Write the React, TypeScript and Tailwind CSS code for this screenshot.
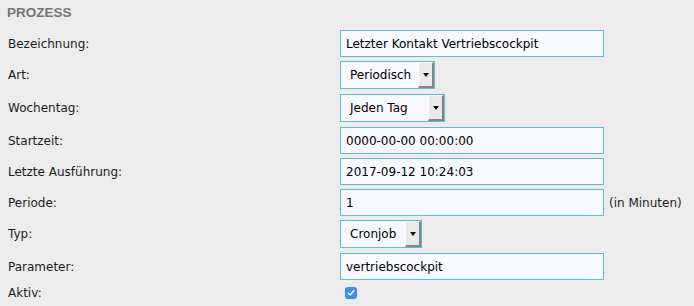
const fieldFont = { fontFamily: '"DejaVu Sans", Verdana, sans-serif' };

function Label({ children }: { children: string }) {
  return <div className="w-[332px] shrink-0 text-[12px] text-[#1c1c1c]">{children}</div>;
}

function TextInput({ value }: { value: string }) {
  return (
    <div className="flex items-center h-[27px] w-[264px] border border-[#5bbfd1] bg-[#f7f9ff] pl-[5px] text-[12px] text-black">
      {value}
    </div>
  );
}

function Select({ value, width }: { value: string; width: string }) {
  return (
    <div className={`flex items-stretch h-[28px] ${width} border border-[#5bbfd1] bg-[#f7f9ff] text-[12px] text-black`}>
      <div className="flex-1 flex items-center pl-[9px]">{value}</div>
      <div className="w-[16px] flex items-center justify-center bg-[#e9e9e9] border-t border-l border-white border-r-2 border-b-2 border-r-[#858585] border-b-[#858585]">
        <svg width="6" height="4" viewBox="0 0 6 4">
          <path d="M0 0 L6 0 L3 4 Z" fill="#111" />
        </svg>
      </div>
    </div>
  );
}

export default function App() {
  return (
    <div className="w-[694px] h-[306px] bg-[#ececec] overflow-hidden pl-[8px]" style={fieldFont}>
      <h2
        className="pt-[5px] -ml-[1px] h-[30px] text-[13.5px] leading-[15px] font-bold text-[#757575]"
        style={{ fontFamily: '"Liberation Sans", Arial, sans-serif' }}
      >
        PROZESS
      </h2>

      <div className="flex items-center h-[27px] mb-[4px]">
        <Label>Bezeichnung:</Label>
        <TextInput value="Letzter Kontakt Vertriebscockpit" />
      </div>
      <div className="flex items-center h-[28px] mb-[5px]">
        <Label>Art:</Label>
        <Select value="Periodisch" width="w-[95px]" />
      </div>
      <div className="flex items-center h-[28px] mb-[5px]">
        <Label>Wochentag:</Label>
        <Select value="Jeden Tag" width="w-[105px]" />
      </div>
      <div className="flex items-center h-[27px] mb-[4px]">
        <Label>Startzeit:</Label>
        <TextInput value="0000-00-00 00:00:00" />
      </div>
      <div className="flex items-center h-[27px] mb-[4px]">
        <Label>Letzte Ausführung:</Label>
        <TextInput value="2017-09-12 10:24:03" />
      </div>
      <div className="flex items-center h-[27px] mb-[4px]">
        <Label>Periode:</Label>
        <TextInput value="1" />
        <span className="ml-[5px] text-[12px] text-[#1c1c1c]">(in Minuten)</span>
      </div>
      <div className="flex items-center h-[28px] mb-[5px]">
        <Label>Typ:</Label>
        <Select value="Cronjob" width="w-[82px]" />
      </div>
      <div className="flex items-center h-[27px] mb-[4px]">
        <Label>Parameter:</Label>
        <TextInput value="vertriebscockpit" />
      </div>
      <div className="flex items-center h-[18px]">
        <Label>Aktiv:</Label>
        <div className="ml-[5px] w-[12px] h-[12px] rounded-[3px] bg-[#3a8ef6] flex items-center justify-center">
          <svg width="8" height="8" viewBox="0 0 8 8">
            <path d="M1.3 4.2 L3.2 6 L6.7 1.8" fill="none" stroke="white" strokeWidth="1.5" strokeLinecap="round" strokeLinejoin="round" />
          </svg>
        </div>
      </div>
    </div>
  );
}
